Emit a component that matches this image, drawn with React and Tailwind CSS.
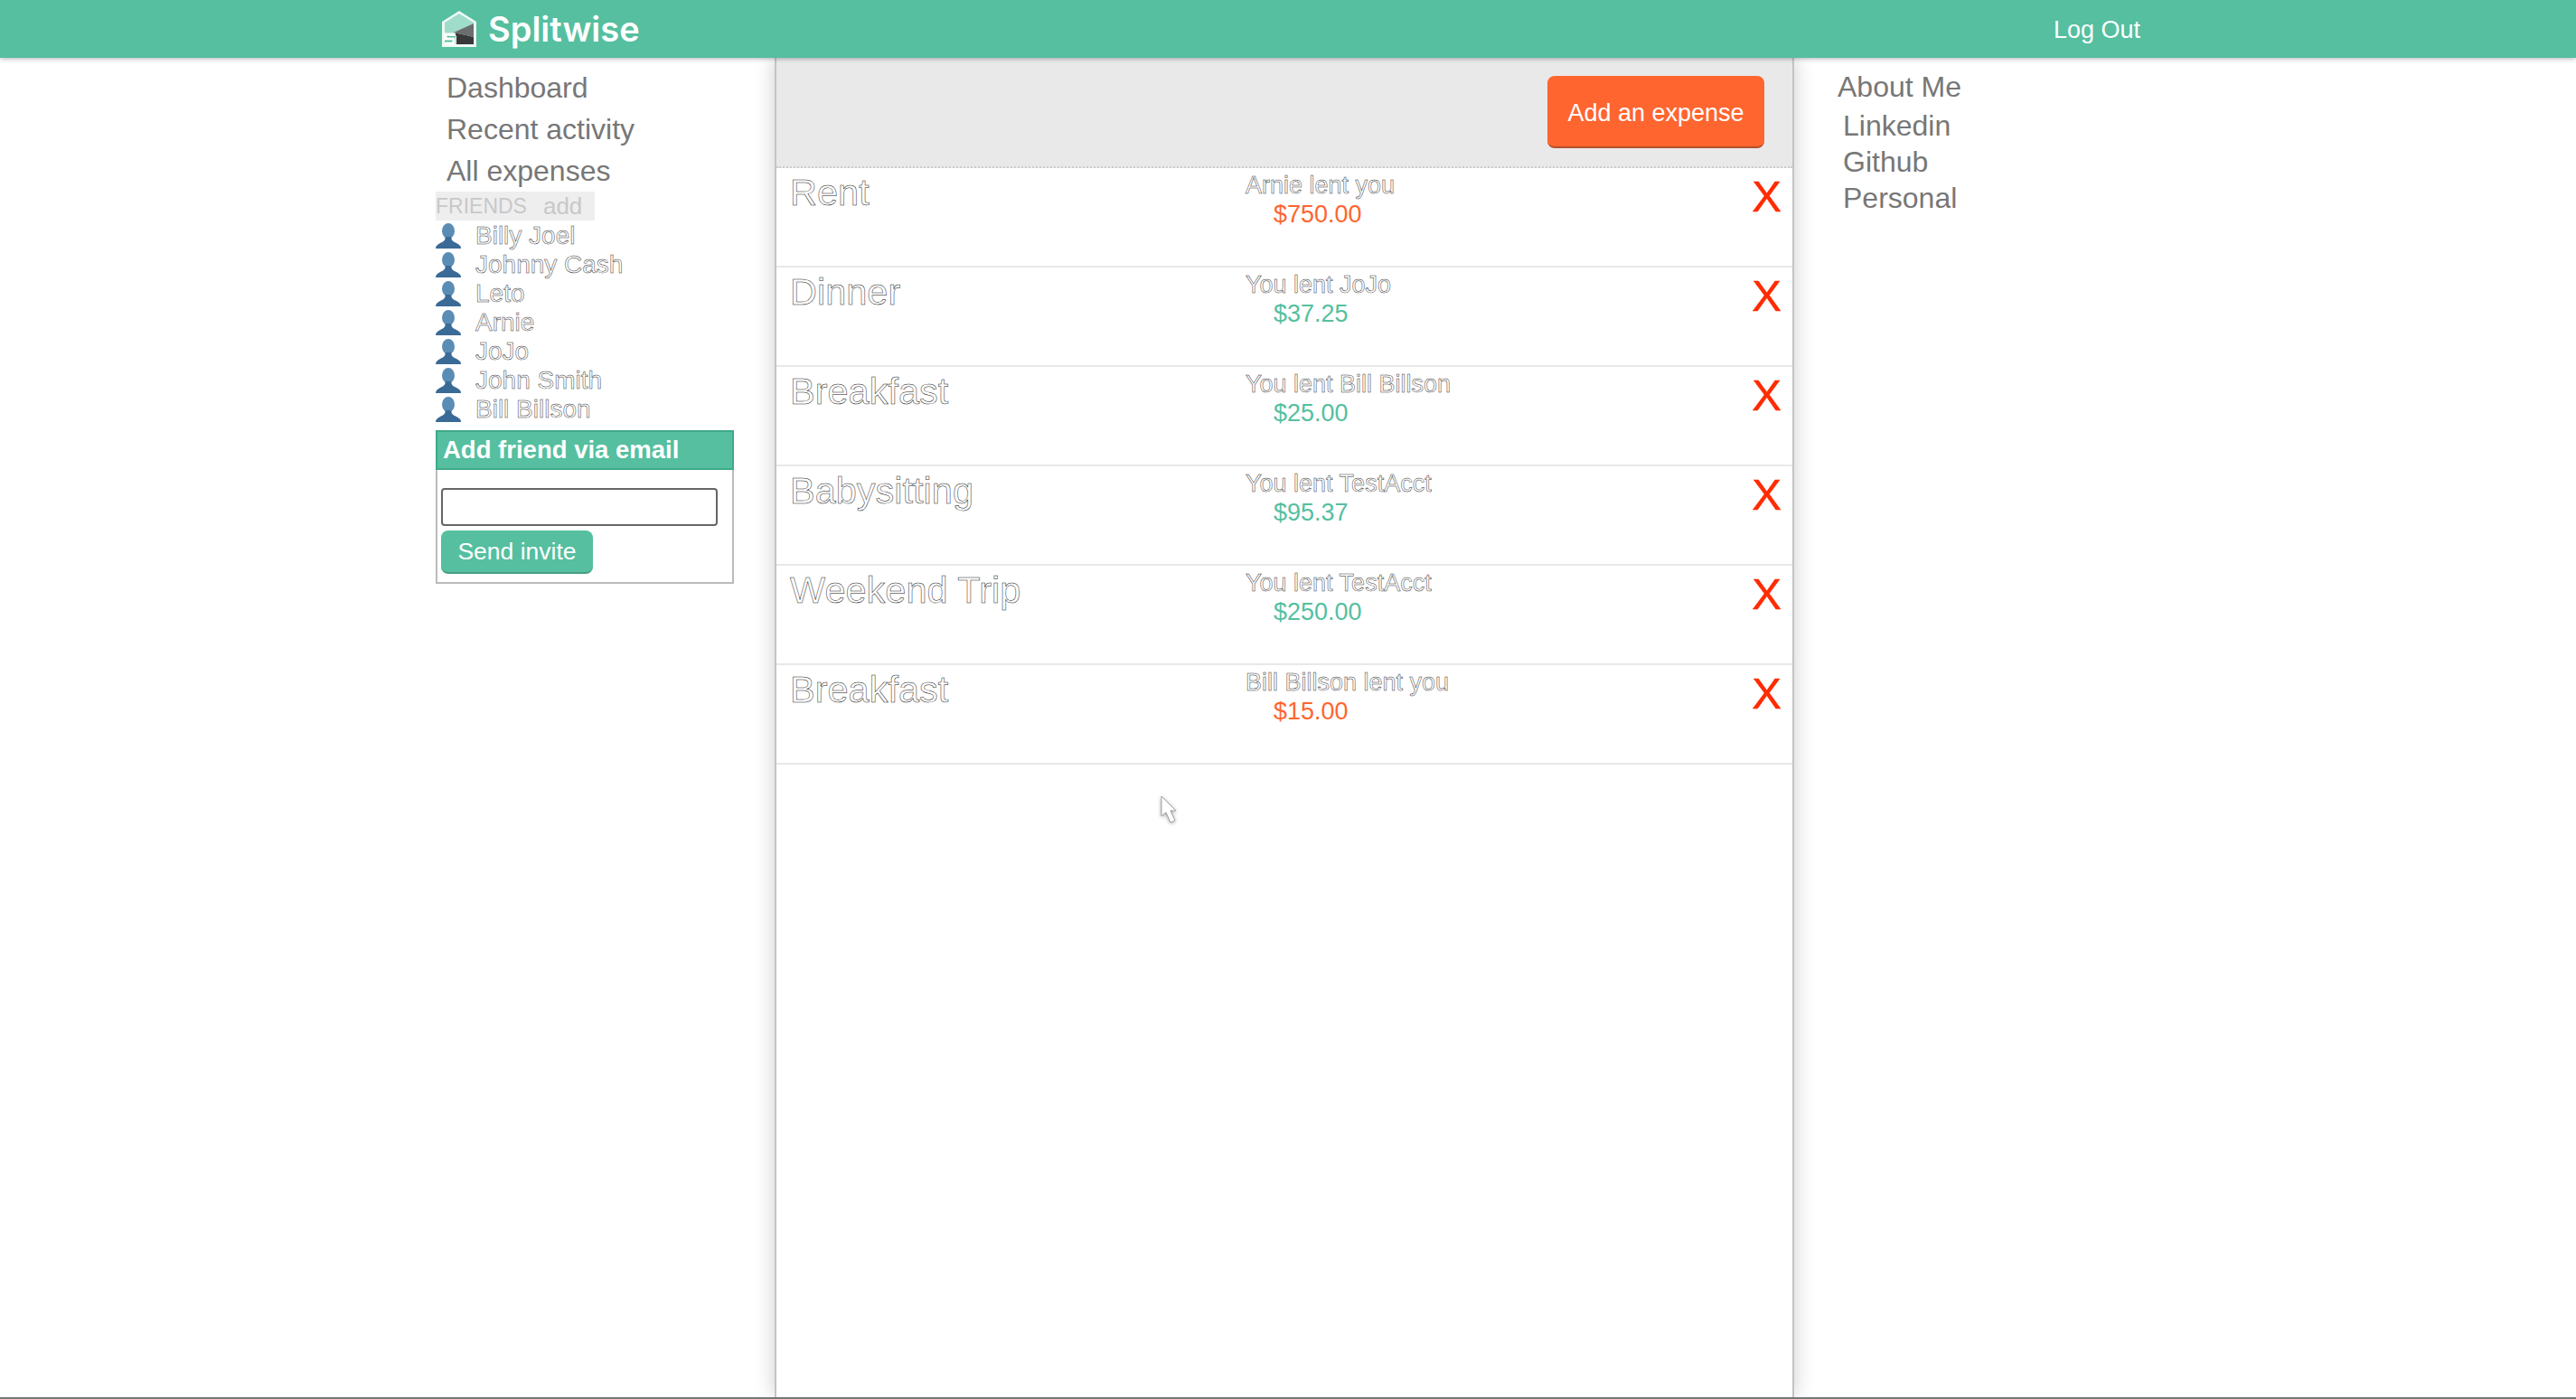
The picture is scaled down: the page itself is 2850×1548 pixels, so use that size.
const friends = ['Billy Joel', 'Johnny Cash', 'Leto', 'Arnie', 'JoJo', 'John Smith', 'Bill Billson']

const expenses = [
  { title: 'Rent', who: 'Arnie lent you', amount: '$750.00', owed: true },
  { title: 'Dinner', who: 'You lent JoJo', amount: '$37.25' },
  { title: 'Breakfast', who: 'You lent Bill Billson', amount: '$25.00' },
  { title: 'Babysitting', who: 'You lent TestAcct', amount: '$95.37' },
  { title: 'Weekend Trip', who: 'You lent TestAcct', amount: '$250.00' },
  { title: 'Breakfast', who: 'Bill Billson lent you', amount: '$15.00', owed: true },
]

function Logo() {
  return (
    <svg width="40" height="42" viewBox="0 0 40 42" className="shrink-0">
      <path d="M1 13 L20 1 L39 13 L39 41 L1 41 Z" fill="#eef8f5" />
      <path d="M4 14 L20 4 L36 14 L36 15 L4 31 Z" fill="#9fdcc9" />
      <path d="M36 15 L36 30 L14 25 Z" fill="#6a6d6d" />
      <path d="M14 25 L36 30 L36 38 L17 38 L17 29 Z" fill="#383838" />
      <path d="M4 29 L16 29 L16 38 L4 38 Z" fill="#55bf9f" />
      <path d="M16 27 L5 27 L5 32 L14 32 L14 37 L4 37" fill="none" stroke="#fff" strokeWidth="3" />
    </svg>
  )
}

function PersonIcon() {
  return (
    <svg width="28" height="28" viewBox="0 0 28 28" className="shrink-0">
      <ellipse cx="14" cy="8.5" rx="7" ry="8.5" fill="#5b8db4" />
      <path d="M10.5 15 C11 19 9 20 5 22 C2 23.5 0 25 0 28 L28 28 C28 25 26 23.5 23 22 C19 20 17 19 17.5 15 Z" fill="#3a6a96" />
    </svg>
  )
}

function Cursor() {
  return (
    <svg width="28" height="38" viewBox="0 0 28 38" className="absolute top-[879px] left-[1283px] z-30 drop-shadow-[0_1px_2px_rgba(0,0,0,0.35)]">
      <path d="M2 2 L2 24 L7 20 L12 31 L17 29 L12 18 L18 18 Z" fill="#fff" stroke="#888" strokeWidth="0.75" />
    </svg>
  )
}

export default function App() {
  return (
    <div className="relative h-[1548px] overflow-hidden border-b-2 border-[#777777] bg-white font-['Liberation_Sans',sans-serif]">
      {/* Top bar */}
      <header className="relative z-20 flex h-16 items-center bg-[#55bf9f] pl-[488px] shadow-[0_1px_5px_rgba(0,0,0,0.3)]">
        <Logo />
        <span className="ml-3 font-['Inter',sans-serif] text-[38px] leading-none font-semibold text-white">Splitwise</span>
        <a className="mt-[2px] mr-[482px] ml-auto text-[27px] text-white">Log Out</a>
      </header>

      <div className="flex h-[1482px] pl-[482px]">
        {/* Left nav */}
        <aside className="w-[375px] shrink-0">
          <nav className="flex flex-col pt-[10px] pl-[12px] text-[32px] leading-[46px] text-[#777]">
            <a>Dashboard</a>
            <a>Recent activity</a>
            <a>All expenses</a>
          </nav>
          <div className="flex h-8 w-[176px] items-center gap-[18px] bg-[#eeeeee] text-[#c8c8c8]">
            <span className="text-[23px]">FRIENDS</span>
            <span className="text-[26px]">add</span>
          </div>
          <ul className="mt-[1px]">
            {friends.map((name) => (
              <li key={name} className="flex h-8 items-center gap-4">
                <PersonIcon />
                <span className="text-[28px] leading-none text-white [-webkit-text-stroke:0.5px_#333333]">{name}</span>
              </li>
            ))}
          </ul>
          <div className="mt-[7px] h-[170px] w-[330px] border-2 border-t-0 border-[#bbbbbb]">
            <div className="-mx-[2px] flex h-11 items-center border-2 border-[#3fa98a] bg-[#55bf9f] pl-[6px] text-[27.5px] font-bold text-white">
              Add friend via email
            </div>
            <input className="mt-5 ml-1 block h-[42px] w-[306px] rounded border-2 border-[#666666] bg-white" />
            <button className="mt-[5px] ml-1 h-[48px] w-[168px] rounded-lg border-b-2 border-[#469e84] bg-[#55bf9f] pt-[2px] text-[26.5px] text-white">
              Send invite
            </button>
          </div>
        </aside>

        {/* Expenses */}
        <main className="relative z-10 w-[1128px] shrink-0 border-x-2 border-[#c4c4c4] bg-white shadow-[0_0_22px_rgba(0,0,0,0.2)]">
          <div className="flex h-[122px] items-start justify-end border-b-2 border-dotted border-[#cccccc] bg-[#e9e9e9] pt-5 pr-[31px]">
            <button className="h-20 w-60 rounded-lg border-b-2 border-[#b5502c] bg-[#ff652f] pt-1 text-[27px] text-white">
              Add an expense
            </button>
          </div>
          {expenses.map((e, i) => (
            <div key={i} className="flex h-[110px] items-start border-b-2 border-[#e8e8e8]">
              <div className="w-[519px] shrink-0 pt-[5px] pl-[15px] text-[41.5px] leading-[44px] text-white [-webkit-text-stroke:0.5px_#222222]">
                {e.title}
              </div>
              <div className="flex-1 text-[27px] leading-[32px]">
                <div className="pt-[3px] text-white [-webkit-text-stroke:0.5px_#333333]">{e.who}</div>
                <div className={`pl-[31px] ${e.owed ? 'text-[#ff652f]' : 'text-[#55bf9f]'}`}>{e.amount}</div>
              </div>
              <button className="mr-[12px] pt-[3px] text-[49px] leading-[56px] text-[#ff2b00] [-webkit-text-stroke:0.5px_#ff2b00]">X</button>
            </div>
          ))}
        </main>

        {/* Right links */}
        <aside className="flex-1 pt-[10px] pl-[48px] text-[32px] text-[#777]">
          <div className="leading-[45px]">About Me</div>
          <div className="flex flex-col pl-[6px] leading-10">
            <a>Linkedin</a>
            <a>Github</a>
            <a>Personal</a>
          </div>
        </aside>
      </div>

      <Cursor />
    </div>
  )
}
